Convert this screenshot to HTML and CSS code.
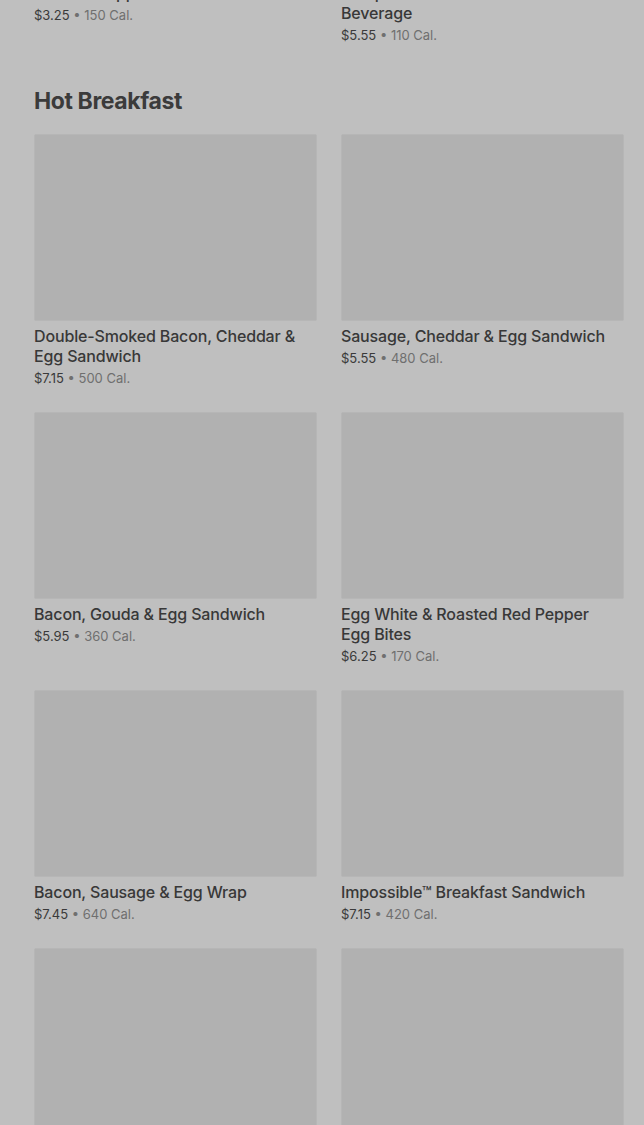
FILE: index.html
```html
<!DOCTYPE html>
<html lang="en">
<head>
  <meta charset="UTF-8">
  <meta name="viewport" content="width=device-width, initial-scale=1.0">
  <title>Menu</title>
  <link rel="stylesheet" href="styles.css">
</head>
<body>
  <div class="menu">
    <div class="product-grid product-grid-prev">
      <div class="product">
        <div class="product-image"></div>
        <h3 class="product-name">Steamed Apple Juice with Caramel</h3>
        <p class="product-meta"><span class="price">$3.25</span> <span class="dot">•</span> <span class="cal">150 Cal.</span></p>
      </div>
      <div class="product">
        <div class="product-image"></div>
        <h3 class="product-name">Pumpkin Cream Cold Brew Nitro Beverage</h3>
        <p class="product-meta"><span class="price">$5.55</span> <span class="dot">•</span> <span class="cal">110 Cal.</span></p>
      </div>
    </div>

    <section class="menu-section">
      <h2 class="section-title">Hot Breakfast</h2>
      <div class="product-grid">
        <div class="product">
          <div class="product-image"></div>
          <h3 class="product-name">Double-Smoked Bacon, Cheddar &amp; Egg Sandwich</h3>
          <p class="product-meta"><span class="price">$7.15</span> <span class="dot">•</span> <span class="cal">500 Cal.</span></p>
        </div>
        <div class="product">
          <div class="product-image"></div>
          <h3 class="product-name">Sausage, Cheddar &amp; Egg Sandwich</h3>
          <p class="product-meta"><span class="price">$5.55</span> <span class="dot">•</span> <span class="cal">480 Cal.</span></p>
        </div>
        <div class="product">
          <div class="product-image"></div>
          <h3 class="product-name">Bacon, Gouda &amp; Egg Sandwich</h3>
          <p class="product-meta"><span class="price">$5.95</span> <span class="dot">•</span> <span class="cal">360 Cal.</span></p>
        </div>
        <div class="product">
          <div class="product-image"></div>
          <h3 class="product-name">Egg White &amp; Roasted Red Pepper Egg Bites</h3>
          <p class="product-meta"><span class="price">$6.25</span> <span class="dot">•</span> <span class="cal">170 Cal.</span></p>
        </div>
        <div class="product">
          <div class="product-image"></div>
          <h3 class="product-name">Bacon, Sausage &amp; Egg Wrap</h3>
          <p class="product-meta"><span class="price">$7.45</span> <span class="dot">•</span> <span class="cal">640 Cal.</span></p>
        </div>
        <div class="product">
          <div class="product-image"></div>
          <h3 class="product-name">Impossible™ Breakfast Sandwich</h3>
          <p class="product-meta"><span class="price">$7.15</span> <span class="dot">•</span> <span class="cal">420 Cal.</span></p>
        </div>
        <div class="product">
          <div class="product-image"></div>
          <h3 class="product-name">Turkey Bacon, Cheddar &amp; Egg White Sandwich</h3>
          <p class="product-meta"><span class="price">$5.75</span> <span class="dot">•</span> <span class="cal">230 Cal.</span></p>
        </div>
        <div class="product">
          <div class="product-image"></div>
          <h3 class="product-name">Spinach, Feta &amp; Egg White Wrap</h3>
          <p class="product-meta"><span class="price">$5.45</span> <span class="dot">•</span> <span class="cal">290 Cal.</span></p>
        </div>
      </div>
    </section>
  </div>
</body>
</html>
```

FILE: styles.css
```css
body {
  margin: 0;
  font-family: Inter, "Noto Sans", Arial, sans-serif;
  background-color: #bfbfbf;
  color: #3a3a3a;
}
.menu {
  padding: 0 20px 0 34px;
}
.product-grid {
  display: grid;
  grid-template-columns: 283px 283px;
  column-gap: 24px;
  row-gap: 24px;
}
.product-grid-prev {
  margin-top: -209px;
}
.menu-section {
  padding-top: 40px;
}
.section-title {
  margin: 0 0 17px;
  font-size: 23px;
  line-height: 32px;
  font-weight: 700;
  letter-spacing: -0.4px;
  color: #3b3b3b;
}
.product-image {
  height: 187px;
  background-color: #b1b1b1;
  border: 1px solid #b6b6b6;
  border-radius: 2px;
  box-sizing: border-box;
}
.product-name {
  margin: 5px 0 0;
  padding-right: 12px;
  font-size: 16px;
  line-height: 20px;
  font-weight: 500;
  letter-spacing: -0.15px;
  color: #383838;
}
.product-meta {
  margin: 2px 0 0;
  font-size: 13px;
  line-height: 20px;
}
.price {
  color: #3a3a3a;
}
.dot,
.cal {
  color: #6f6f6f;
}
```
